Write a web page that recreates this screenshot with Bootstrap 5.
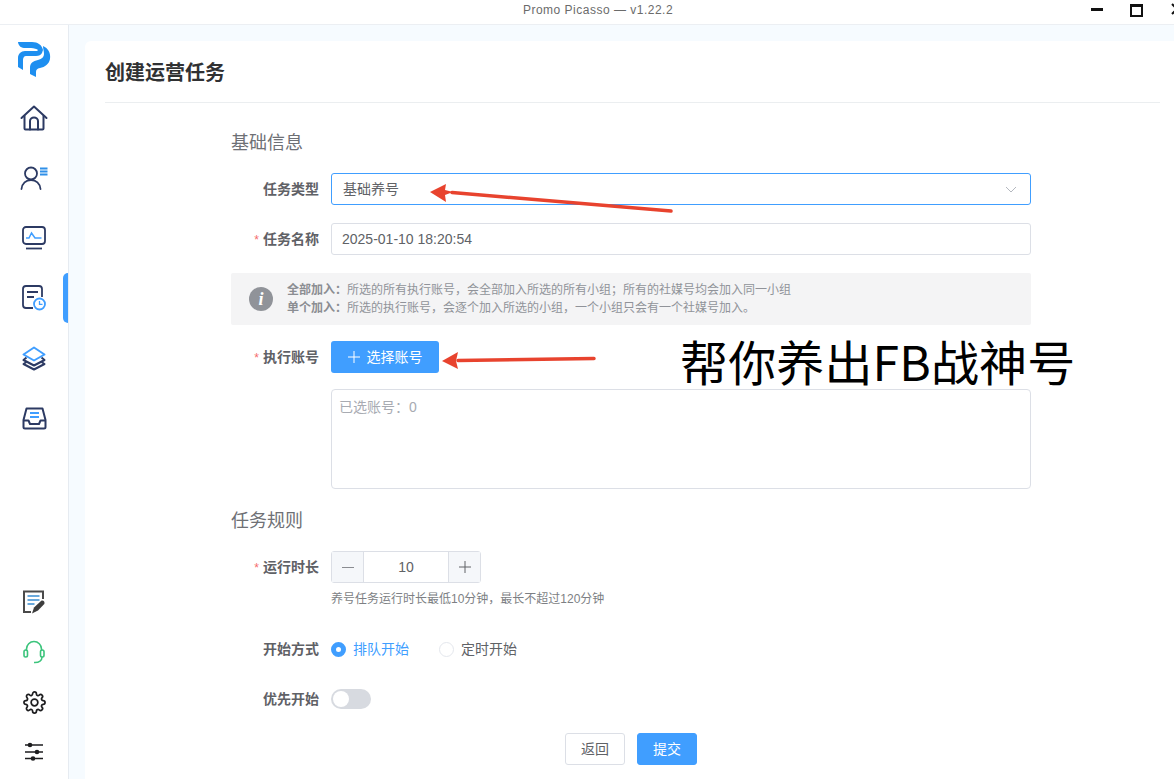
<!DOCTYPE html>
<html lang="zh">
<head>
<meta charset="utf-8">
<title>Promo Picasso</title>
<link href="https://cdn.jsdelivr.net/npm/bootstrap@5.3.0/dist/css/bootstrap.min.css" rel="stylesheet">
<style>
html,body{height:779px;overflow:hidden}
body{font-family:"Liberation Sans","Noto Sans CJK SC",sans-serif;font-size:14px;color:#606266;background:#fff;position:relative}
.title-strip{height:25px;border-bottom:1px solid #eceff3;position:relative;font-size:12px;line-height:20px;color:#6b6b6b;text-align:center;letter-spacing:.5px;padding-left:22px}
.win-ctl{position:absolute;top:0;left:1091px;display:flex;gap:27px;align-items:flex-start}
.shell{height:754px}
.side-rail{width:69px;border-right:1px solid #e6ebf1;flex:none;padding-top:4px;padding-bottom:2px}
.rail-slot{height:60px;width:68px;position:relative}
.rail-slot.low{height:50px}
.rail-slot.first{height:59px}
.rail-mark{position:absolute;right:0;top:5px;width:5px;height:50px;background:#409eff;border-radius:5px 0 0 5px}
.page-bg{background:#f6fbff;padding:16px 0 0 16px;flex:1;min-width:0}
.sheet{background:#fff;height:100%;border-radius:6px 0 0 0;padding:0 14px 0 20px}
.sheet-head{height:62px;border-bottom:1px solid #ebeef0;font-size:20px;font-weight:700;color:#303133;line-height:64px}
.form-wrap{width:800px;margin-left:126px}
.group-title{font-size:18px;line-height:26px;color:#6e7075;font-weight:400}
.gt-one{margin-top:27px;margin-bottom:17px}
.gt-two{margin-top:19px;margin-bottom:17px}
.form-line{display:flex;margin-bottom:18px}
.line-pick{margin-bottom:16px}
.line-num{margin-bottom:25px}
.line-last{margin-bottom:0}
.lbl{width:88px;flex:none;text-align:right;font-weight:700;color:#5f6166;line-height:32px;font-size:14px;white-space:nowrap}
.lbl i{color:#f56c6c;font-style:normal;font-weight:400;margin-right:4px;font-size:12px;line-height:1}
.ctl{margin-left:12px;flex:1;min-width:0}
.field-box{height:32px;border:1px solid #dcdfe6;border-radius:3px;line-height:30px;padding:0 10px;color:#606266;font-size:14px;display:flex;align-items:center;justify-content:space-between}
.field-box.on{border-color:#409eff;padding-left:11px;padding-right:13px}
.tip-box{background:#f4f4f5;height:52px;border-radius:2px;margin-bottom:16px;padding:0 0 0 18px;display:flex;align-items:center;font-size:12px;line-height:18px;color:#909399}
.tip-box b{color:#8b8d92}
.tip-ico{width:24px;height:24px;border-radius:50%;background:#909399;color:#fff;font:italic 700 18px/24px "Liberation Serif",serif;text-align:center;margin-right:14px;flex:none}
.btn-pick{height:32px;width:108px;background:#409eff;border:0;color:#fff;padding:0;font-size:14px;border-radius:3px;display:flex;align-items:center;justify-content:center;gap:7px}
.btn-pick:hover{background:#409eff;color:#fff}
.pick-box{margin:16px 0 0 0;height:100px;border:1px solid #dcdfe6;border-radius:4px;padding:8px 7px;color:#a8abb2;line-height:18px;font-size:14px}
.num-box{width:150px;height:32px;border:1px solid #dcdfe6;border-radius:3px;display:flex;line-height:30px;text-align:center}
.num-btn{width:32px;background:#f5f7fa;flex:none;color:#606266;font-size:18px;display:flex;align-items:center;justify-content:center}
.num-btn.l{border-right:1px solid #dcdfe6}
.num-btn.r{border-left:1px solid #dcdfe6}
.num-val{flex:1}
.hint-line{font-size:12px;line-height:18px;color:#7d7f84;margin-top:7px}
.radio-row{display:flex;align-items:center;height:32px;font-size:14px}
.rad{width:15px;height:15px;border-radius:50%;border:1px solid #e4e7ed;display:inline-block;margin-right:7px;background:#fff}
.rad.sel{border:5px solid #409eff}
.rad-t{color:#606266;margin-right:30px}
.rad-t.sel{color:#409eff}
.sw{width:40px;height:20px;background:#d7dae0;border-radius:10px;position:relative;margin-top:6px}
.sw::after{content:"";position:absolute;left:2px;top:2px;width:16px;height:16px;border-radius:50%;background:#fff}
.foot-btns{justify-content:center;margin-top:18px;column-gap:12px}
.btn-back,.btn-send{width:60px;height:32px;padding:0;font-size:14px;border-radius:3px;line-height:30px}
.btn-back{border:1px solid #dcdfe6;color:#606266;background:#fff}
.btn-send{border:1px solid #409eff;background:#409eff;color:#fff}
.note-layer{position:absolute;left:0;top:0;pointer-events:none}
.big-note{position:absolute;left:680px;top:327px;font-size:48px;line-height:66px;color:#000;font-family:"Noto Sans CJK SC","Noto Sans",sans-serif;white-space:nowrap;letter-spacing:.15px}
</style>
</head>
<body>
<div class="title-strip">Promo Picasso — v1.22.2
  <div class="win-ctl">
    <svg width="12" height="18" viewBox="0 0 12 18"><rect x="0" y="8" width="12" height="3" fill="#111"/></svg>
    <svg width="13" height="18" viewBox="0 0 13 18"><rect x="1" y="5" width="11" height="11" fill="none" stroke="#111" stroke-width="2"/><rect x="0" y="4" width="13" height="3" fill="#111"/></svg>
    <svg width="14" height="18" viewBox="0 0 14 18"><path d="M2 4l10 10M12 4L2 14" stroke="#111" stroke-width="2"/></svg>
  </div>
</div>
<div class="shell d-flex">
  <nav class="side-rail d-flex flex-column">
    <div class="rail-slot first d-flex align-items-center justify-content-center">
      <svg width="34" height="36" viewBox="0 0 34 36" fill="#1e8ff0"><path d="M1 1h14c6 0 10 3 11 8l-1 3c-1 2-3 3-6 3H9c-2 0-3 2-3 4v10L1 26V17c0-4 3-7 7-7h11c1 0 2-.5 2-1-1-1-4-2-7-2H7C3 7 1 3 1 1z"/><path d="M26 5c5 2 8 7 7 13-1 5-5 8-10 9-3 .6-4 2-4 4v5l-6-3v-6c0-5 3-7 8-8 4-1 6-3 6-6 0-3-1-5-1-8z"/></svg>
    </div>
    <div class="rail-slot d-flex align-items-center justify-content-center">
      <svg width="28" height="26" viewBox="0 0 28 26" fill="none" stroke="#2c3a63" stroke-width="2" stroke-linejoin="round" stroke-linecap="round"><path d="M1.500 13L14 1.500 26.500 13"/><path d="M4.500 11v12.500c0 .6.400 1 1 1h17c.6 0 1-.4 1-1V11"/><path d="M10 24.500V16c0-2 1.800-3.500 4-3.500s4 1.500 4 3.500v8.500"/></svg>
    </div>
    <div class="rail-slot d-flex align-items-center justify-content-center">
      <svg width="28" height="24" viewBox="0 0 28 24" fill="none"><circle cx="11" cy="7.500" r="6" stroke="#2c3a63" stroke-width="1.800"/><path d="M1.500 23c.5-5.500 4.500-9 9.500-9s9 3.500 9.500 9" stroke="#2c3a63" stroke-width="1.800" stroke-linecap="round"/><path d="M20 2.500h7.500M20 5.500h7.500M20 8.500h7.500" stroke="#2f8fe8" stroke-width="1.800"/></svg>
    </div>
    <div class="rail-slot d-flex align-items-center justify-content-center">
      <svg width="24" height="24" viewBox="0 0 24 24" fill="none"><rect x="1" y="1" width="22" height="17" rx="3" stroke="#2c3a63" stroke-width="1.800"/><path d="M4 12h3l2.500-5 3.500 5h6.500" stroke="#409eff" stroke-width="1.500"/><path d="M4 22.500h16" stroke="#2c3a63" stroke-width="1.800"/></svg>
    </div>
    <div class="rail-slot d-flex align-items-center justify-content-center">
      <div class="rail-mark"></div>
      <svg width="24" height="26" viewBox="0 0 24 26" fill="none"><path d="M11 23H4c-1.700 0-3-1.300-3-3V4c0-1.700 1.300-3 3-3h13c1.700 0 3 1.300 3 3v8" stroke="#2c3a63" stroke-width="1.800"/><path d="M5 7h11M5 12h7" stroke="#2c3a63" stroke-width="1.800"/><circle cx="17.500" cy="19" r="5.500" fill="#fff" stroke="#409eff" stroke-width="1.800"/><path d="M17.500 16v3.300h3" stroke="#409eff" stroke-width="1.300"/></svg>
    </div>
    <div class="rail-slot d-flex align-items-center justify-content-center">
      <svg width="24" height="25" viewBox="0 0 24 25" fill="none" stroke-width="2" stroke-linejoin="round"><path d="M4.500 11.500L1.500 14 12 19.500 22.500 14l-3-2.500" stroke="#2c3a63"/><path d="M4.500 16L1.500 18 12 23.500 22.500 18l-3-2" stroke="#2c3a63"/><path d="M12 1.500L22.500 8.500 12 14.500 1.500 8.500z" stroke="#409eff" fill="#fff"/></svg>
    </div>
    <div class="rail-slot d-flex align-items-center justify-content-center">
      <svg width="25" height="23" viewBox="0 0 25 23" fill="none" stroke-width="2" stroke-linejoin="round"><path d="M1.500 13L4.500 1.500h16l3 11.500v7c0 .8-.6 1.500-1.500 1.500H3c-.9 0-1.500-.7-1.500-1.500z" stroke="#2c3a63"/><path d="M1.500 13.500h5l1.500 3.500h9l1.500-3.500h5" stroke="#2c3a63"/><path d="M8 6h9M8 10h9" stroke="#409eff"/></svg>
    </div>
    <div class="mt-auto"></div>
    <div class="rail-slot low d-flex align-items-center justify-content-center">
      <svg width="24" height="24" viewBox="0 0 24 24" fill="none"><path d="M21 9V1.500H2v20.500h7" stroke="#4a4a4a" stroke-width="2"/><path d="M5.500 6h12M5.500 10h12M5.500 14h7" stroke="#6aa9dc" stroke-width="2"/><path d="M10 23.500l2-6 7-6.500c2-1.300 4.300 1 3.300 3L16 20.500z" fill="#3d3d3d"/></svg>
    </div>
    <div class="rail-slot low d-flex align-items-center justify-content-center">
      <svg width="22" height="24" viewBox="0 0 22 24" fill="none" stroke="#3cc47c" stroke-width="1.600"><path d="M3.500 11V9a7.500 7.500 0 0 1 15 0v2"/><rect x="1" y="10" width="3.500" height="7" rx="1.700"/><rect x="17.500" y="10" width="3.500" height="7" rx="1.700"/><path d="M19 17c0 3.500-3 5.500-7 5.500h-1"/></svg>
    </div>
    <div class="rail-slot low d-flex align-items-center justify-content-center">
      <svg width="23" height="23" viewBox="0 0 24 24" fill="none" stroke="#1d1d1f" stroke-width="1.800" stroke-linejoin="round"><circle cx="12" cy="12" r="3.500"/><path d="M19.400 15a1.700 1.700 0 0 0 .3 1.800l.1.100a2 2 0 1 1-2.900 2.900l-.1-.1a1.700 1.700 0 0 0-2.800 1.200V21a2 2 0 1 1-4 0v-.1a1.700 1.700 0 0 0-2.900-1.200l-.1.100a2 2 0 1 1-2.800-2.900l.1-.1a1.700 1.700 0 0 0-1.200-2.800H3a2 2 0 1 1 0-4h.1a1.700 1.700 0 0 0 1.200-2.900l-.1-.1a2 2 0 1 1 2.900-2.800l.1.100a1.700 1.700 0 0 0 2.800-1.200V3a2 2 0 1 1 4 0v.1a1.700 1.700 0 0 0 2.900 1.200l.1-.1a2 2 0 1 1 2.800 2.900l-.1.100a1.700 1.700 0 0 0 1.200 2.800h.1a2 2 0 1 1 0 4h-.1a1.700 1.700 0 0 0-1.500 1z"/></svg>
    </div>
    <div class="rail-slot low d-flex align-items-center justify-content-center">
      <svg width="20" height="20" viewBox="0 0 20 20" fill="#1d1d1f"><path d="M1 3h18M1 10h18M1 16.500h18" stroke="#1d1d1f" stroke-width="1.600"/><circle cx="6" cy="3" r="2.300"/><circle cx="13" cy="10" r="2.300"/><circle cx="9" cy="16.500" r="2.300"/></svg>
    </div>
  </nav>
  <main class="page-bg">
    <div class="sheet">
      <div class="sheet-head">创建运营任务</div>
      <div class="form-wrap">
        <div class="group-title gt-one">基础信息</div>
        <div class="form-line">
          <div class="lbl">任务类型</div>
          <div class="ctl"><div class="field-box on"><span>基础养号</span><svg width="12" height="7" viewBox="0 0 12 7" fill="none"><path d="M1 1l5 5 5-5" stroke="#b4b8bf"/></svg></div></div>
        </div>
        <div class="form-line">
          <div class="lbl"><i>*</i>任务名称</div>
          <div class="ctl"><div class="field-box">2025-01-10 18:20:54</div></div>
        </div>
        <div class="tip-box">
          <div class="tip-ico">i</div>
          <div><b>全部加入：</b>所选的所有执行账号，会全部加入所选的所有小组；所有的社媒号均会加入同一小组<br><b>单个加入：</b>所选的执行账号，会逐个加入所选的小组，一个小组只会有一个社媒号加入。</div>
        </div>
        <div class="form-line line-pick">
          <div class="lbl"><i>*</i>执行账号</div>
          <div class="ctl">
            <button type="button" class="btn btn-pick"><svg width="12" height="12" viewBox="0 0 12 12"><path d="M6 0v12M0 6h12" stroke="#fff" stroke-width="1"/></svg>选择账号</button>
            <div class="pick-box">已选账号：0</div>
          </div>
        </div>
        <div class="group-title gt-two">任务规则</div>
        <div class="form-line line-num">
          <div class="lbl"><i>*</i>运行时长</div>
          <div class="ctl">
            <div class="num-box"><div class="num-btn l"><svg width="12" height="1" viewBox="0 0 12 1"><path d="M0 .5h12" stroke="#8a8c91"/></svg></div><div class="num-val">10</div><div class="num-btn r"><svg width="12" height="12" viewBox="0 0 12 12"><path d="M6 0v12M0 6h12" stroke="#606266"/></svg></div></div>
            <div class="hint-line">养号任务运行时长最低10分钟，最长不超过120分钟</div>
          </div>
        </div>
        <div class="form-line">
          <div class="lbl">开始方式</div>
          <div class="ctl radio-row"><span class="rad sel"></span><span class="rad-t sel">排队开始</span><span class="rad"></span><span class="rad-t">定时开始</span></div>
        </div>
        <div class="form-line line-last">
          <div class="lbl">优先开始</div>
          <div class="ctl"><div class="sw"></div></div>
        </div>
      </div>
      <div class="form-wrap d-flex foot-btns">
        <button type="button" class="btn btn-back">返回</button>
        <button type="button" class="btn btn-send">提交</button>
      </div>
    </div>
  </main>
</div>
<svg class="note-layer" width="1174" height="779" viewBox="0 0 1174 779">
  <path d="M671 211L452 192.500" stroke="#e8432e" stroke-width="3.500" stroke-linecap="round" fill="none"/>
  <path d="M430 192l16-8-1 6 8 2-8 3 1 7z" fill="#e8432e"/>
  <path d="M594 358.500L458 360.500" stroke="#e8432e" stroke-width="3.500" stroke-linecap="round" fill="none"/>
  <path d="M442 361l16-9-2 9 2 8z" fill="#e8432e"/>
</svg>
<div class="big-note">帮你养出FB战神号</div>
<script src="https://cdn.jsdelivr.net/npm/bootstrap@5.3.0/dist/js/bootstrap.bundle.min.js"></script>
</body>
</html>
